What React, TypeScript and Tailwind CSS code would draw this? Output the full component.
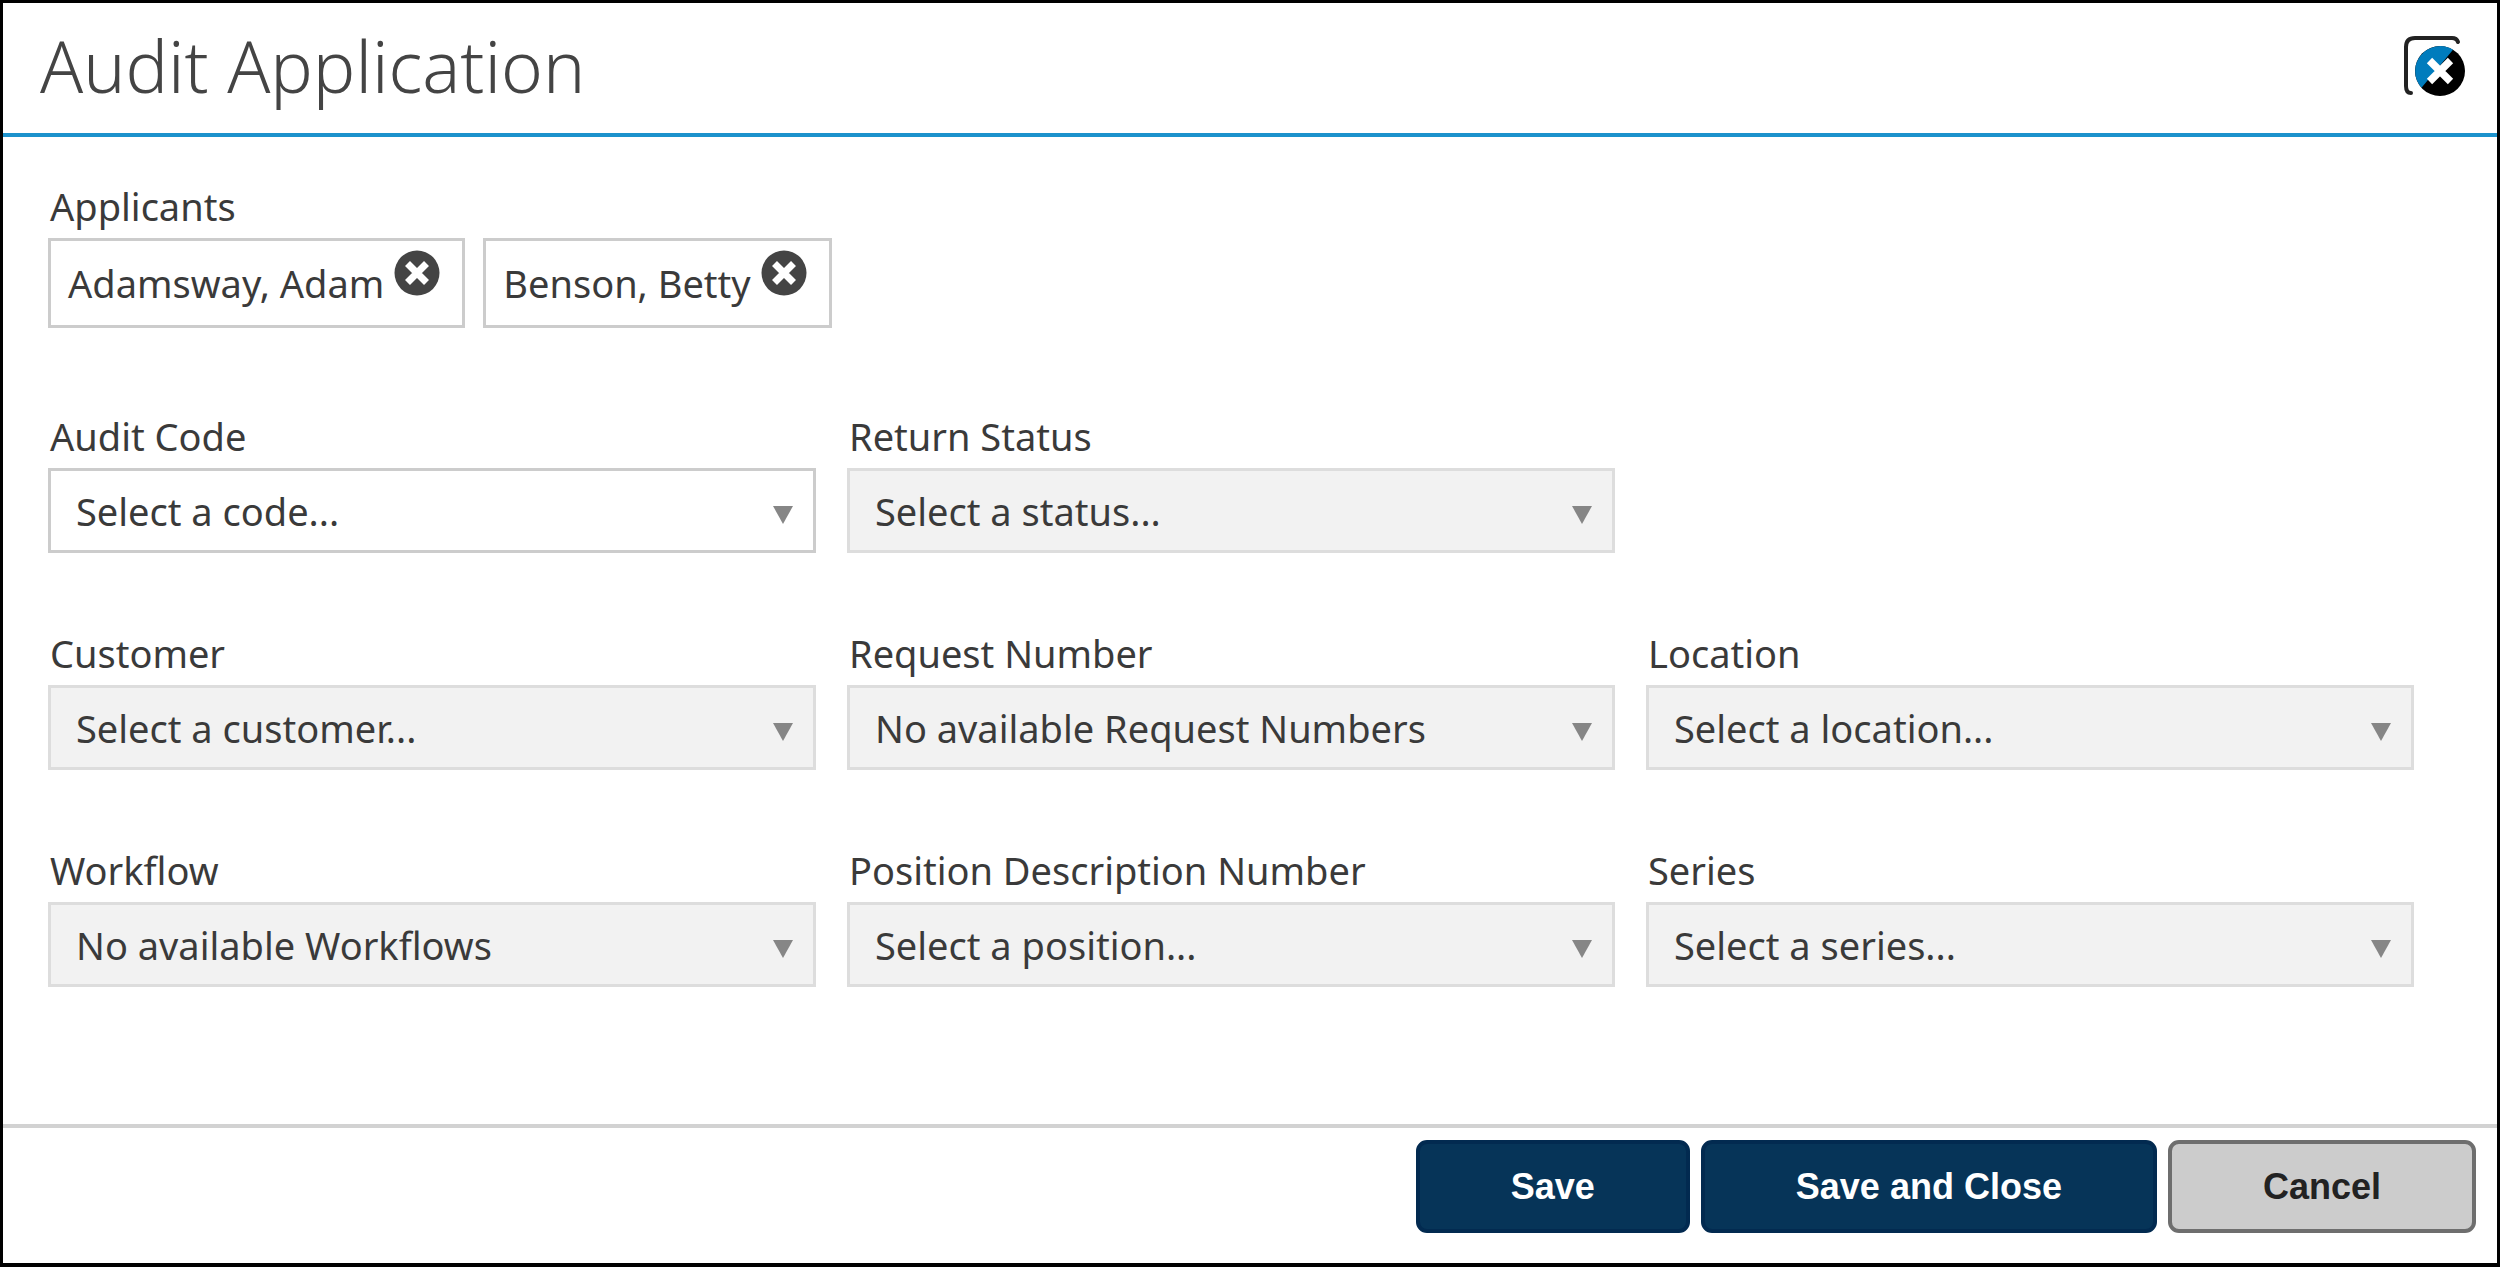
type Field = { id: string; label: string; placeholder: string; enabled?: boolean };

const auditFields: Field[] = [
  { id: "audit-code", label: "Audit Code", placeholder: "Select a code...", enabled: true },
  { id: "return-status", label: "Return Status", placeholder: "Select a status..." },
];

const requestFields: Field[] = [
  { id: "customer", label: "Customer", placeholder: "Select a customer..." },
  { id: "request-number", label: "Request Number", placeholder: "No available Request Numbers" },
  { id: "location", label: "Location", placeholder: "Select a location..." },
  { id: "workflow", label: "Workflow", placeholder: "No available Workflows" },
  { id: "position", label: "Position Description Number", placeholder: "Select a position..." },
  { id: "series", label: "Series", placeholder: "Select a series..." },
];

const applicants = ["Adamsway, Adam", "Benson, Betty"];

function RemoveIcon() {
  return (
    <svg viewBox="0 0 46 46" className="size-[46px]" aria-hidden="true">
      <circle cx="23" cy="23" r="22.5" fill="#444" />
      <path d="M13.5 13.5 32.5 32.5M32.5 13.5 13.5 32.5" stroke="#fff" strokeWidth="7" />
    </svg>
  );
}

function CloseIcon() {
  return (
    <svg viewBox="0 0 64 64" className="size-16" aria-hidden="true">
      <path
        d="M56 8C55 5 53 4 50 4H13Q4 4 4 13V52C4 56 5 59 9 59"
        fill="none"
        stroke="#222"
        strokeWidth="4"
        strokeLinecap="round"
      />
      <circle cx="38" cy="37" r="25" fill="#000" />
      <path d="M19.5 53.8A25 25 0 0 1 51 15.7Z" fill="#007cbd" />
      <path d="M27.5 26.5 48.5 47.5M48.5 26.5 27.5 47.5" stroke="#fff" strokeWidth="7.5" />
    </svg>
  );
}

function SelectField({ id, label, placeholder, enabled = false }: Field) {
  return (
    <div className="flex min-w-0 flex-col gap-1.5">
      <label htmlFor={id} className="pl-0.5">
        {label}
      </label>
      <div className="relative">
        <select
          id={id}
          disabled={!enabled}
          className="h-[85px] w-full appearance-none border-3 border-[#ccc] bg-white pr-16 pl-[25px] opacity-100 disabled:border-[#ddd] disabled:bg-[#f2f2f2]"
        >
          <option>{placeholder}</option>
        </select>
        <svg
          viewBox="0 0 20 18"
          className="pointer-events-none absolute top-[38px] right-[23px] h-[18px] w-5"
          aria-hidden="true"
        >
          <path d="M0 0H20L10 18Z" fill="#868686" />
        </svg>
      </div>
    </div>
  );
}

const buttonBase = "h-[93px] rounded-[11px] border-4 px-[91px] font-['Liberation_Sans',Arial,sans-serif] text-[36px] font-bold";

export default function App() {
  return (
    <div
      role="dialog"
      aria-labelledby="dialog-title"
      className="flex min-h-screen flex-col border-3 border-b-4 border-black bg-white font-['Noto_Sans',sans-serif] text-[38px] leading-[52px] text-[#3a3a3a]"
    >
      <header className="flex h-[134px] items-center justify-between border-b-4 border-[#1c92cc] pr-[31px] pb-1 pl-[37px]">
        <h1 id="dialog-title" className="text-[71px] leading-[96px] font-light text-[#444]">
          Audit Application
        </h1>
        <button type="button" aria-label="Close">
          <CloseIcon />
        </button>
      </header>

      <main className="flex-1 pt-[43px] pr-[83px] pb-16 pl-[45px]">
        <section className="flex flex-col gap-1.5">
          <h2 className="pl-0.5">Applicants</h2>
          <ul className="flex flex-wrap gap-[18px]">
            {applicants.map((name) => (
              <li key={name} className="flex h-[90px] items-center gap-2.5 border-3 border-[#ccc] pr-[22px] pl-[17px]">
                <span>{name}</span>
                <button type="button" aria-label={`Remove ${name}`} className="mt-[9px] self-start">
                  <RemoveIcon />
                </button>
              </li>
            ))}
          </ul>
        </section>

        <div className="mt-[82px] grid grid-cols-3 gap-x-[31px]">
          {auditFields.map((f) => (
            <SelectField key={f.id} {...f} />
          ))}
        </div>
        <div className="mt-[74px] grid grid-cols-3 gap-x-[31px] gap-y-[74px]">
          {requestFields.map((f) => (
            <SelectField key={f.id} {...f} />
          ))}
        </div>
      </main>

      <footer className="flex justify-end gap-[11px] border-t-4 border-[#d2d2d2] pt-[12px] pr-[21px] pb-[30px]">
        <button type="button" className={`${buttonBase} border-[#022a50] bg-[#063458] text-white`}>
          Save
        </button>
        <button type="button" className={`${buttonBase} border-[#022a50] bg-[#063458] text-white`}>
          Save and Close
        </button>
        <button type="button" className={`${buttonBase} border-[#6e6e6e] bg-[#ccc] text-[#222]`}>
          Cancel
        </button>
      </footer>
    </div>
  );
}
